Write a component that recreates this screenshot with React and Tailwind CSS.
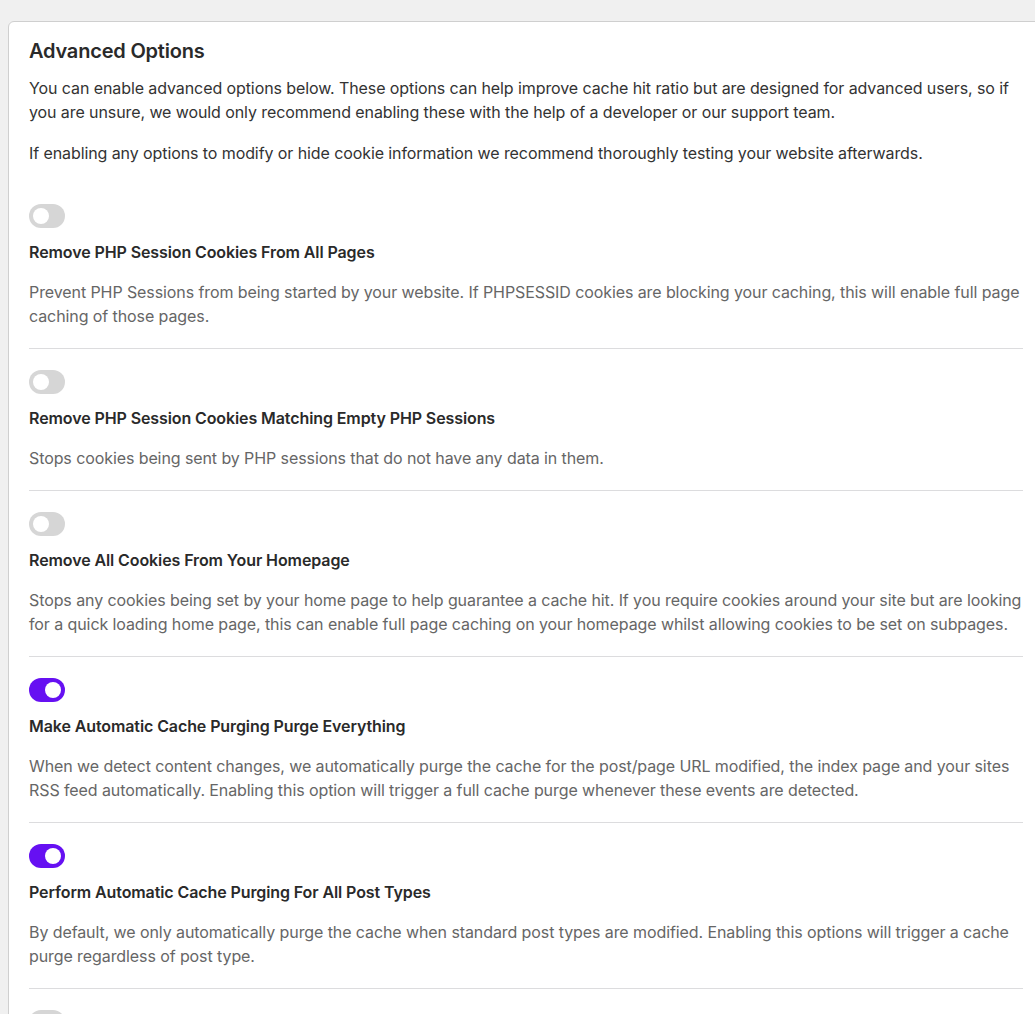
import React, { useState } from "react";

const options = [
  {
    id: "php-session-all",
    title: "Remove PHP Session Cookies From All Pages",
    text: "Prevent PHP Sessions from being started by your website. If PHPSESSID cookies are blocking your caching, this will enable full page caching of those pages.",
    enabled: false,
  },
  {
    id: "php-session-empty",
    title: "Remove PHP Session Cookies Matching Empty PHP Sessions",
    text: "Stops cookies being sent by PHP sessions that do not have any data in them.",
    enabled: false,
  },
  {
    id: "homepage-cookies",
    title: "Remove All Cookies From Your Homepage",
    text: "Stops any cookies being set by your home page to help guarantee a cache hit. If you require cookies around your site but are looking for a quick loading home page, this can enable full page caching on your homepage whilst allowing cookies to be set on subpages.",
    enabled: false,
  },
  {
    id: "purge-everything",
    title: "Make Automatic Cache Purging Purge Everything",
    text: "When we detect content changes, we automatically purge the cache for the post/page URL modified, the index page and your sites RSS feed automatically. Enabling this option will trigger a full cache purge whenever these events are detected.",
    enabled: true,
  },
  {
    id: "purge-post-types",
    title: "Perform Automatic Cache Purging For All Post Types",
    text: "By default, we only automatically purge the cache when standard post types are modified. Enabling this options will trigger a cache purge regardless of post type.",
    enabled: true,
  },
  {
    id: "ignore-query",
    title: "Ignore Query Strings When Caching",
    text: "Serve the cached version of a page even when the URL contains query string parameters.",
    enabled: false,
  },
];

const Toggle = ({ checked, onChange }) => (
  <button
    type="button"
    role="switch"
    aria-checked={checked}
    onClick={onChange}
    className={`flex items-center w-9 h-6 rounded-full px-1 ${
      checked ? "bg-[#6610f2] justify-end" : "bg-[#d6d6d6] justify-start"
    }`}
  >
    <span className="block w-4 h-4 rounded-full bg-white" />
  </button>
);

const App = () => {
  const [state, setState] = useState(
    Object.fromEntries(options.map((o) => [o.id, o.enabled]))
  );

  const flip = (id) => setState((s) => ({ ...s, [id]: !s[id] }));

  return (
    <div
      className="min-h-screen bg-[#f0f0f0] pt-[21px] pl-2 overflow-hidden"
      style={{ fontFamily: "Inter, 'Noto Sans', sans-serif" }}
    >
      <div className="w-[1036px] bg-white border border-[#cfcfcf] rounded-md pt-[15px] pl-5 pr-5 pb-8">
        {/* Header */}
        <h2 className="text-[20px] leading-7 font-semibold tracking-[-0.2px] text-[#2a2a2a] mb-[11px]">
          Advanced Options
        </h2>
        <p className="text-[16px] leading-6 tracking-[-0.09px] text-[#333333]">
          You can enable advanced options below. These options can help improve
          cache hit ratio but are designed for advanced users, so if you are
          unsure, we would only recommend enabling these with the help of a
          developer or our support team.
        </p>
        <p className="text-[16px] leading-6 tracking-[-0.09px] text-[#333333] mt-[17px]">
          If enabling any options to modify or hide cookie information we
          recommend thoroughly testing your website afterwards.
        </p>

        {/* Options */}
        <div className="mt-[39px]">
          {options.map((o) => (
            <div
              key={o.id}
              className="border-b border-[#dcdcde] pb-5 mb-[21px] flex flex-col items-start"
            >
              <Toggle checked={state[o.id]} onChange={() => flip(o.id)} />
              <h3 className="mt-[14px] text-[16px] leading-5 font-semibold tracking-[-0.1px] text-[#2a2a2a]">
                {o.title}
              </h3>
              <p className="mt-[18px] text-[16px] leading-6 tracking-[-0.09px] text-[#666666]">
                {o.text}
              </p>
            </div>
          ))}
        </div>
      </div>
    </div>
  );
};

export default App;
